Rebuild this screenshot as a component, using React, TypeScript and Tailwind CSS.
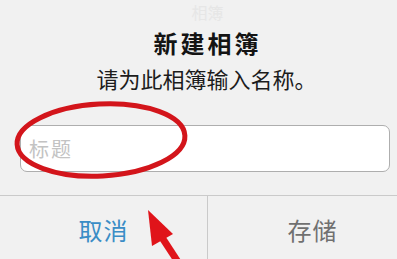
const FONT = { fontFamily: '"Noto Sans CJK SC", "Noto Sans", sans-serif' };

export default function App() {
  return (
    <div
      className="relative w-[397px] h-[259px] overflow-hidden bg-[#f1f1f1] flex flex-col"
      style={FONT}
    >
      {/* faint label showing through from behind the alert */}
      <div className="h-[22px] pt-[3px] text-center text-[16px] leading-[18px] text-[#e6e6e6] pl-[18px]">
        相簿
      </div>

      <h1 className="mt-[8px] text-center text-[24px] leading-[26px] font-semibold tracking-[3px] text-[#141414] pl-[18px]">
        新建相簿
      </h1>
      <p className="mt-[10px] text-center text-[22px] leading-[24px] text-[#1c1c1c] pl-[16px]">
        请为此相簿输入名称。
      </p>

      <div className="mt-[35px] mx-[20px] w-[370px] h-[47px] rounded-[7px] border border-[#aeaeae] bg-white flex items-center pl-[8px]">
        <span className="text-[20px] tracking-[2px] text-[#c3c3c3]">标题</span>
      </div>

      <div className="mt-[23px] flex-1 flex border-t border-[#cacaca]">
        <button className="w-[207px] flex items-center justify-center pt-[5px] text-[24px] tracking-[1px] text-[#3a8dc6]">
          取消
        </button>
        <button className="flex-1 flex items-center justify-center pt-[5px] pl-[20px] border-l border-[#cacaca] text-[24px] tracking-[1px] text-[#707070]">
          存储
        </button>
      </div>

      {/* red annotation drawn over the screenshot */}
      <svg className="absolute inset-0 pointer-events-none" width="397" height="259">
        <ellipse
          cx="101"
          cy="140"
          rx="84"
          ry="36"
          fill="none"
          stroke="#d3151b"
          strokeWidth="5"
          transform="rotate(-3 101 140)"
        />
        <polygon points="148,210 152,246 173,234" fill="#e0141a" />
        <line x1="161" y1="236" x2="178" y2="262" stroke="#e0141a" strokeWidth="7" />
      </svg>
    </div>
  );
}
